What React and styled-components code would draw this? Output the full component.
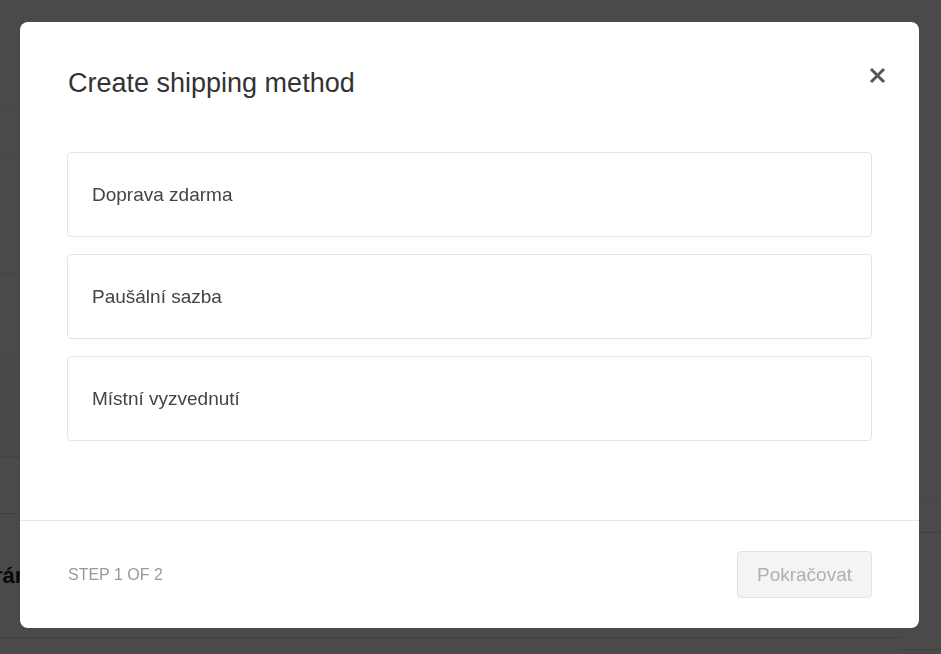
import React from "react";
import styled, { createGlobalStyle } from "styled-components";

const GlobalStyle = createGlobalStyle`
  html, body {
    margin: 0;
    padding: 0;
    background: #ffffff;
    font-family: "Liberation Sans", Arial, sans-serif;
  }
  * { box-sizing: border-box; }
`;

// page behind the overlay
const Page = styled.div`
  width: 941px;
  height: 654px;
  display: grid;
  grid-template-columns: 1fr 40px;
  overflow: hidden;
`;

const MainCol = styled.div`
  display: flex;
  flex-direction: column;
`;

const SideCol = styled.div`
  display: flex;
  flex-direction: column;
`;

const Row = styled.div`
  height: ${p => p.$h}px;
  flex: none;
  border-bottom: 1px ${p => (p.$dotted ? "dotted" : "solid")} ${p => p.$line || "#dcdcdc"};
  background: ${p => p.$bg || "transparent"};
  display: flex;
  align-items: center;
`;

const PageHeading = styled.span`
  font-size: 22px;
  font-weight: 700;
  color: #222;
  margin-left: -6px;
`;

const Overlay = styled.div`
  position: fixed;
  inset: 0;
  background: rgba(0, 0, 0, 0.71);
  display: flex;
  align-items: flex-start;
  justify-content: flex-start;
  padding: 22px 0 0 20px;
`;

const Modal = styled.div`
  width: 899px;
  background: #ffffff;
  border-radius: 8px;
  display: flex;
  flex-direction: column;
`;

const Header = styled.div`
  display: flex;
  justify-content: space-between;
  align-items: flex-start;
  padding: 46px 33px 0 48px;
`;

const Title = styled.h2`
  margin: 0;
  font-size: 27px;
  line-height: 31px;
  font-weight: 400;
  color: #333;
`;

const Close = styled.button`
  border: 0;
  background: none;
  padding: 0;
  margin-top: -1px;
  width: 17px;
  height: 17px;
  color: #555;
  cursor: pointer;
  display: flex;
`;

const Body = styled.div`
  display: flex;
  flex-direction: column;
  gap: 17px;
  padding: 53px 47px 79px 47px;
`;

const Option = styled.div`
  height: 85px;
  border: 1px solid #e4e4e4;
  border-radius: 4px;
  display: flex;
  align-items: center;
  padding-left: 24px;
  font-size: 19px;
  color: #444;
  cursor: pointer;
`;

const Footer = styled.div`
  border-top: 1px solid #e6e6e6;
  display: flex;
  justify-content: space-between;
  align-items: center;
  padding: 30px 47px 30px 48px;
`;

const Step = styled.span`
  font-size: 16px;
  color: #999;
  text-transform: uppercase;
`;

const NextButton = styled.button`
  width: 135px;
  height: 47px;
  border: 1px solid #e2e2e2;
  border-radius: 4px;
  background: #f4f4f4;
  color: #b0b0b0;
  font-family: inherit;
  font-size: 19px;
  cursor: default;
`;

const OPTIONS = ["Doprava zdarma", "Paušální sazba", "Místní vyzvednutí"];

const App = () => {
    return (
        <>
            <GlobalStyle />
            <Page>
                <MainCol>
                    <Row $h={110} $dotted />
                    <Row $h={45} $dotted />
                    <Row $h={118} $dotted />
                    <Row $h={81} $dotted />
                    <Row $h={104} $bg="#f6f6f6" />
                    <Row $h={56} />
                    <Row $h={124}>
                        <PageHeading>rání</PageHeading>
                    </Row>
                </MainCol>
                <SideCol>
                    <Row $h={499} $line="#f0f0f0" />
                    <Row $h={34} />
                    <Row $h={117} />
                </SideCol>
            </Page>
            <Overlay>
                <Modal>
                    <Header>
                        <Title>Create shipping method</Title>
                        <Close aria-label="Close">
                            <svg width="17" height="17" viewBox="0 0 17 17">
                                <path d="M2 2 L15 15 M15 2 L2 15" stroke="currentColor" strokeWidth="3" strokeLinecap="butt" />
                            </svg>
                        </Close>
                    </Header>
                    <Body>
                        {OPTIONS.map(name => (
                            <Option key={name}>{name}</Option>
                        ))}
                    </Body>
                    <Footer>
                        <Step>Step 1 of 2</Step>
                        <NextButton disabled>Pokračovat</NextButton>
                    </Footer>
                </Modal>
            </Overlay>
        </>
    );
};

export default App;
